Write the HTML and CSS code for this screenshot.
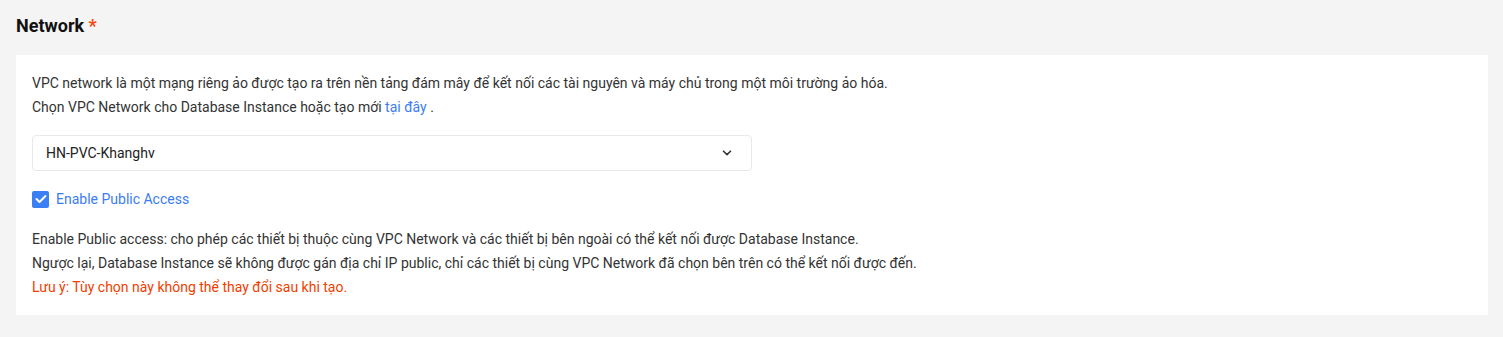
FILE: index.html
```html
<!DOCTYPE html>
<html lang="vi">
<head>
<meta charset="utf-8">
<link rel="stylesheet" href="styles.css">
</head>
<body>
<div class="page">
  <h2 class="title">Network <span class="req">*</span></h2>
  <div class="card">
    <p class="line">VPC network là một mạng riêng ảo được tạo ra trên nền tảng đám mây để kết nối các tài nguyên và máy chủ trong một môi trường ảo hóa.</p>
    <p class="line">Chọn VPC Network cho Database Instance hoặc tạo mới <a class="link" href="#">tại đây</a> .</p>
    <div class="select">
      <span class="select-value">HN-PVC-Khanghv</span>
      <svg class="chev" width="10" height="6" viewBox="0 0 10 6"><path d="M1.5 1.2 L5 4.6 L8.5 1.2" fill="none" stroke="#333" stroke-width="1.6" stroke-linecap="round" stroke-linejoin="round"/></svg>
    </div>
    <label class="check-row">
      <span class="checkbox"><svg width="12" height="10" viewBox="0 0 12 10"><path d="M1.5 5 L4.5 8 L10.5 2" fill="none" stroke="#fff" stroke-width="2" stroke-linecap="round" stroke-linejoin="round"/></svg></span>
      <span class="check-label">Enable Public Access</span>
    </label>
    <div class="desc">
      <p class="line">Enable Public access: cho phép các thiết bị thuộc cùng VPC Network và các thiết bị bên ngoài có thể kết nối được Database Instance.</p>
      <p class="line">Ngược lại, Database Instance sẽ không được gán địa chỉ IP public, chỉ các thiết bị cùng VPC Network đã chọn bên trên có thể kết nối được đến.</p>
      <p class="line warn">Lưu ý: Tùy chọn này không thể thay đổi sau khi tạo.</p>
    </div>
  </div>
</div>
</body>
</html>
```
FILE: styles.css
```css
* { box-sizing: border-box; }
html, body { margin: 0; padding: 0; }
body {
  background: #f4f4f4;
  font-family: Roboto, "Noto Sans", Arial, sans-serif;
  color: #333;
  height: 337px;
}
.page {
  padding: 14px 15px 0 16px;
}
.title {
  margin: 0 0 17px 0;
  font-size: 18px;
  line-height: 24px;
  font-weight: 700;
  color: #111;
}
.req { color: #f5470f; font-weight: 700; }
.card {
  background: #fff;
  padding: 16px;
  display: flex;
  flex-direction: column;
}
.line {
  margin: 0;
  font-size: 14px;
  line-height: 24px;
  color: #333;
}
.link { color: #3b7cf5; text-decoration: none; }
.select {
  margin-top: 16px;
  width: 720px;
  height: 36px;
  border: 1px solid #e8e8e8;
  border-radius: 4px;
  display: flex;
  align-items: center;
  justify-content: space-between;
  padding: 0 19px 0 13px;
  font-size: 14px;
  color: #222;
}
.chev { display: block; }
.check-row {
  margin-top: 16px;
  display: flex;
  align-items: center;
  gap: 7px;
  height: 24px;
}
.checkbox {
  width: 17px;
  height: 17px;
  border-radius: 2px;
  background: #3b7ff5;
  display: flex;
  align-items: center;
  justify-content: center;
}
.checkbox svg { display: block; }
.check-label {
  font-size: 14px;
  color: #3b7cf5;
  line-height: 24px;
}
.desc { margin-top: 16px; }
.warn { color: #f23d00; }
```
